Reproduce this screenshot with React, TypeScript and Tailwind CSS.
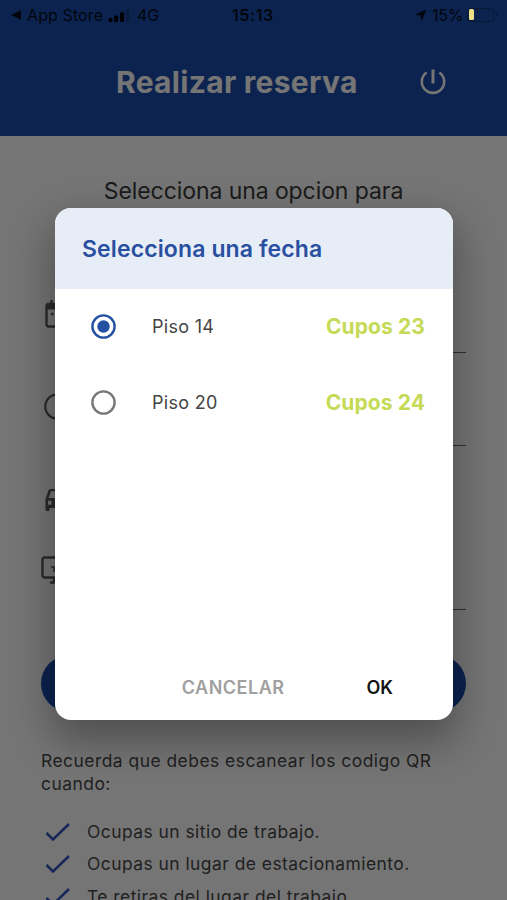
import type { ReactNode } from "react";

type Option = {
  label: string;
  slots: string;
  selected: boolean;
};

const options: Option[] = [
  { label: "Piso 14", slots: "Cupos 23", selected: true },
  { label: "Piso 20", slots: "Cupos 24", selected: false },
];

const reminders = [
  "Ocupas un sitio de trabajo.",
  "Ocupas un lugar de estacionamiento.",
  "Te retiras del lugar del trabajo.",
];

export default function App() {
  return (
    <main className="relative h-[900px] w-[507px] overflow-hidden bg-white font-['Inter',sans-serif]">
      <header className="h-[136px] bg-[#1b4dae]">
        <StatusBar />
        <div className="flex items-center pt-[34px] pl-[116px]">
          <h1 className="w-[303px] text-[30px] leading-[36px] font-bold tracking-[0.3px] whitespace-nowrap text-white">
            Realizar reserva
          </h1>
          <PowerIcon />
        </div>
      </header>

      <section className="px-[41px]">
        <p className="pt-[39px] text-center text-[23px] leading-[32px] tracking-[-0.08px] whitespace-nowrap text-[#3c3c3c]">
          Selecciona una opcion para
        </p>
        <div className="mt-[52px] flex flex-col">
          <Field className="h-[94px]" iconClassName="pt-[15px]">
            <CalendarIcon />
          </Field>
          <Field className="h-[93px]" iconClassName="pt-[14px]">
            <ClockIcon />
          </Field>
          <Field className="h-[94px]" iconClassName="pt-[14px]" underline={false}>
            <CarIcon />
          </Field>
          <Field className="h-[70px]" iconClassName="pb-[10px]">
            <MonitorIcon />
          </Field>
        </div>
        <button className="mt-[45px] block h-[57px] w-full rounded-full bg-[#1b4dae]" aria-label="Reservar" />

        <p className="mt-[37px] text-[17.4px] leading-[23px] tracking-[0.5px] text-[#484848]">
          Recuerda que debes escanear los codigo QR cuando:
        </p>
        <ul className="mt-[20.5px]">
          {reminders.map((reminder) => (
            <li
              key={reminder}
              className="flex h-[32.5px] items-center gap-[16px] pl-[4px] text-[17.4px] tracking-[0.48px] whitespace-nowrap text-[#484848]"
            >
              <CheckIcon />
              {reminder}
            </li>
          ))}
        </ul>
      </section>

      <div className="absolute inset-0 bg-black/54">
        {/* low battery level stays bright above the dimmed screen */}
        <span className="absolute top-[9px] left-[469px] h-[11px] w-[5px] rounded-[1.5px] bg-[#eee08a]" />
        <Dialog />
      </div>
    </main>
  );
}

function StatusBar() {
  return (
    <div className="flex h-[30px] items-center pl-[11px] text-[16px] text-[#050d20]">
      <svg className="mr-[6px] h-[10px] w-[10px]" viewBox="0 0 10 10">
        <path d="M0 5 10 0v10z" fill="currentColor" />
      </svg>
      <span className="w-[81px] tracking-[0.1px] whitespace-nowrap">App Store</span>
      <svg className="h-[13px] w-[24px]" viewBox="0 0 24 13">
        <rect x="0.5" y="9" width="4" height="4" rx="1" />
        <rect x="6.2" y="6.5" width="4" height="6.5" rx="1" />
        <rect x="12" y="3.2" width="4" height="9.8" rx="1" />
        <rect x="17.8" y="0" width="4" height="13" rx="1" opacity="0.2" />
      </svg>
      <span className="ml-[5px] w-[95px]">4G</span>
      <span className="w-[182px] font-semibold tracking-[0.6px]">15:13</span>
      <svg className="h-[13px] w-[13px]" viewBox="0 0 13 13">
        <path d="M12.5.5 7.4 12.5 6.5 6.6.5 5.7z" fill="currentColor" />
      </svg>
      <span className="ml-[5px] w-[35px] tracking-[-0.2px]">15%</span>
      <svg className="h-[16px] w-[31px]" viewBox="0 0 31 16">
        <rect x="0.6" y="1.6" width="26.5" height="13" rx="4" fill="none" stroke="#000" strokeOpacity="0.35" />
        <path d="M29 5.6c1.7.7 1.7 4.1 0 4.8z" opacity="0.35" />
      </svg>
    </div>
  );
}

function Field({
  className,
  iconClassName,
  underline = true,
  children,
}: {
  className: string;
  iconClassName: string;
  underline?: boolean;
  children: ReactNode;
}) {
  return (
    <div className={`flex text-[#5c5c5c] ${className}`}>
      <div className={`flex w-[50px] items-center ${iconClassName}`}>{children}</div>
      <div className={`flex-1 border-[#6a6a6a] ${underline ? "border-b" : ""}`} />
    </div>
  );
}

function Dialog() {
  return (
    <div
      role="dialog"
      className="mt-[208px] ml-[55px] flex h-[512px] w-[398px] flex-col overflow-hidden rounded-[16px] bg-white shadow-[0_18px_40px_4px_rgba(0,0,0,0.32)]"
    >
      <div className="flex h-[81px] items-center bg-[#e7edf7] pt-[1px] pl-[27px]">
        <h2 className="text-[23px] font-semibold tracking-[0.12px] whitespace-nowrap text-[#2950a0]">
          Selecciona una fecha
        </h2>
      </div>
      <div className="flex-1">
        {options.map((option) => (
          <OptionRow key={option.label} {...option} />
        ))}
      </div>
      <div className="flex h-[66px] items-center justify-end pr-[60px] text-[18px] font-semibold">
        <button className="mr-[82px] tracking-[0.5px] text-[#a0a0a0]">CANCELAR</button>
        <button className="text-[#111]">OK</button>
      </div>
    </div>
  );
}

function OptionRow({ label, slots, selected }: Option) {
  return (
    <div className="flex h-[75.5px] items-center pr-[28px] pl-[36px]">
      <svg className="h-[25px] w-[25px]" viewBox="0 0 25 25">
        <circle cx="12.5" cy="12.5" r="11.1" fill="none" stroke={selected ? "#2450a2" : "#777"} strokeWidth="2.4" />
        {selected ? <circle cx="12.5" cy="12.5" r="6.2" fill="#2450a2" /> : null}
      </svg>
      <span className="ml-[36px] flex-1 text-[18px] tracking-[0.3px] text-[#444]">{label}</span>
      <span className="text-[21px] font-bold tracking-[0.1px] text-[#c5da55]">{slots}</span>
    </div>
  );
}

function PowerIcon() {
  return (
    <svg className="h-[28px] w-[28px]" viewBox="0 0 28 28" fill="none" stroke="#fff" strokeWidth="2.6">
      <path d="M14 1.5v14" strokeWidth="3" />
      <path d="M7.6 4.5a11.2 11.2 0 1 0 12.8 0" />
    </svg>
  );
}

function CalendarIcon() {
  return (
    <svg className="ml-[4px] h-[28px] w-[26px]" viewBox="0 0 26 28" fill="none" stroke="currentColor" strokeWidth="2.4">
      <rect x="1.5" y="4" width="23" height="22.5" rx="2" />
      <path d="M1.5 6.5h23" strokeWidth="6" />
      <path d="M6.5 0v6M19.5 0v6" />
      <path d="M6 14h2.6M12 14h2.6M18 14h2.6" />
    </svg>
  );
}

function ClockIcon() {
  return (
    <svg className="ml-[3px] h-[27px] w-[27px]" viewBox="0 0 27 27" fill="none" stroke="currentColor" strokeWidth="2.2">
      <circle cx="13.5" cy="13.5" r="12.2" />
      <path d="M13.5 6v8l5 3" />
    </svg>
  );
}

function CarIcon() {
  return (
    <svg className="ml-[4px] h-[22px] w-[26px]" viewBox="0 0 26 22">
      <path
        fill="currentColor"
        fillRule="evenodd"
        d="M5.5 0h15Q22 0 22.6 1.5L25.5 10v10.5q0 1.5-1.5 1.5h-1q-1.5 0-1.5-1.5V19h-17v1.5Q4.5 22 3 22H2Q.5 22 .5 20.5V10L3.4 1.5Q4 0 5.5 0ZM6 2.2 3.6 9h18.8L20 2.2ZM3 11.8V15.8h3.5v-4ZM19.5 11.8v4h3.5v-4Z"
      />
    </svg>
  );
}

function MonitorIcon() {
  return (
    <svg className="h-[28px] w-[32px]" viewBox="0 0 32 28" fill="none" stroke="currentColor" strokeWidth="2.4">
      <rect x="1.5" y="1.5" width="29" height="20" rx="2" />
      <path d="M13 22v4M19 22v4M9 26.5h14" />
      <path d="M10 11h5M13 11v5" strokeWidth="1.5" />
    </svg>
  );
}

function CheckIcon() {
  return (
    <svg className="h-[20px] w-[26px]" viewBox="0 0 26 20" fill="none" stroke="#3555bd" strokeWidth="2.6">
      <path d="m1.5 11 6.5 6.5L24 2" />
    </svg>
  );
}
